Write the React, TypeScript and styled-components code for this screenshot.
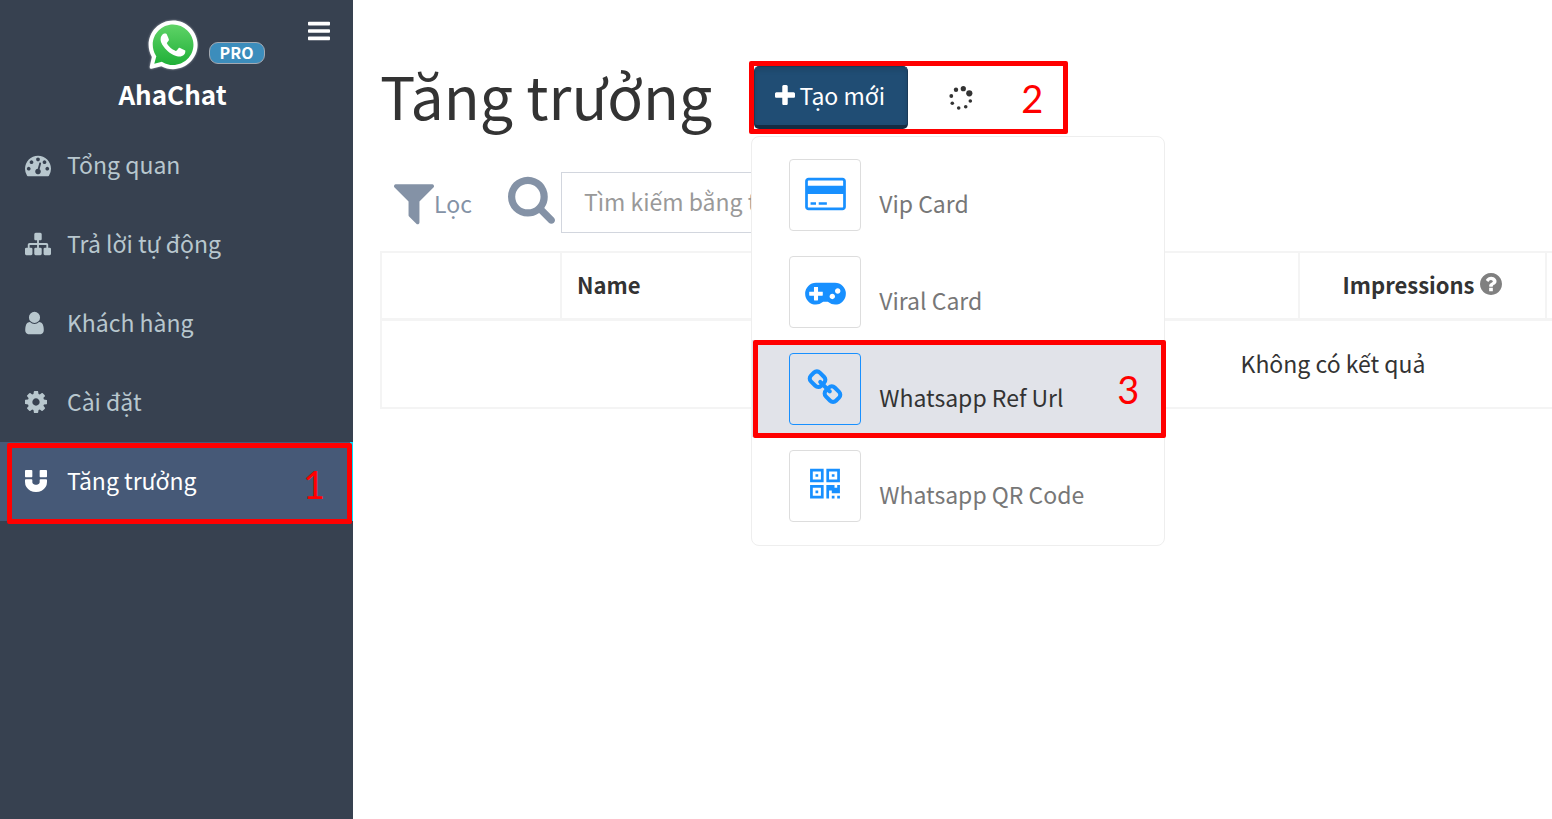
import React from "react";
import styled, { createGlobalStyle } from "styled-components";

const GlobalStyle = createGlobalStyle`
  *, *::before, *::after { box-sizing: border-box; }
  html, body, #root { margin: 0; min-height: 100vh; }
  body {
    background: #fff;
    color: #333;
    font-family: "Noto Sans CJK SC", "Noto Sans", sans-serif;
    font-size: 23px;
    line-height: 36px;
    overflow-x: hidden;
  }
  button, input { font: inherit; color: inherit; }
`;

type Glyph = { box: [number, number]; d: string };

/* box = [left, width] of the glyph on a 1792-unit-high grid */
const glyphs: Record<string, Glyph> = {
  dashboard: {
    box: [0, 1792],
    d: "M384 1152q0-53-37.5-90.5t-90.5-37.5-90.5 37.5-37.5 90.5 37.5 90.5 90.5 37.5 90.5-37.5 37.5-90.5zm192-448q0-53-37.5-90.5t-90.5-37.5-90.5 37.5-37.5 90.5 37.5 90.5 90.5 37.5 90.5-37.5 37.5-90.5zm428 481l101-382q6-26-7.5-48.5t-38.5-29.5-48 6.5-30 39.5l-101 382q-60 5-107 43.5t-63 98.5q-20 77 20 146t117 89 146-20 89-117q16-60-6-117t-72-91zm660-33q0-53-37.5-90.5t-90.5-37.5-90.5 37.5-37.5 90.5 37.5 90.5 90.5 37.5 90.5-37.5 37.5-90.5zm-640-640q0-53-37.5-90.5t-90.5-37.5-90.5 37.5-37.5 90.5 37.5 90.5 90.5 37.5 90.5-37.5 37.5-90.5zm448 192q0-53-37.5-90.5t-90.5-37.5-90.5 37.5-37.5 90.5 37.5 90.5 90.5 37.5 90.5-37.5 37.5-90.5zm320 448q0 261-141 483-19 29-54 29h-1402q-35 0-54-29-141-221-141-483 0-182 71-348t191-286 286-191 348-71 348 71 286 191 191 286 71 348z",
  },
  sitemap: {
    box: [0, 1792],
    d: "M1792 1248v320q0 40-28 68t-68 28h-320q-40 0-68-28t-28-68v-320q0-40 28-68t68-28h96v-192h-512v192h96q40 0 68 28t28 68v320q0 40-28 68t-68 28h-320q-40 0-68-28t-28-68v-320q0-40 28-68t68-28h96v-192h-512v192h96q40 0 68 28t28 68v320q0 40-28 68t-68 28h-320q-40 0-68-28t-28-68v-320q0-40 28-68t68-28h96v-192q0-52 38-90t90-38h512v-192h-96q-40 0-68-28t-28-68v-320q0-40 28-68t68-28h320q40 0 68 28t28 68v320q0 40-28 68t-68 28h-96v192h512q52 0 90 38t38 90v192h96q40 0 68 28t28 68z",
  },
  user: {
    box: [256, 1280],
    d: "M1536 1399q0 109-62.5 187t-150.5 78h-854q-88 0-150.5-78t-62.5-187q0-85 8.5-160.5t31.5-152 58.5-131 94-89 134.5-34.5q131 128 313 128t313-128q76 0 134.5 34.5t94 89 58.5 131 31.5 152 8.5 160.5zm-256-887q0 159-112.5 271.5t-271.5 112.5-271.5-112.5-112.5-271.5 112.5-271.5 271.5-112.5 271.5 112.5 112.5 271.5z",
  },
  cog: {
    box: [128, 1536],
    d: "M1152 896q0-106-75-181t-181-75-181 75-75 181 75 181 181 75 181-75 75-181zm512-109v222q0 12-8 23t-20 13l-185 28q-19 54-39 91 35 50 107 138 10 12 10 25t-9 23q-27 37-99 108t-94 71q-12 0-26-9l-138-108q-44 23-91 38-16 136-29 186-7 28-36 28h-222q-14 0-24.5-8.5t-11.5-21.5l-28-184q-49-16-90-37l-141 107q-10 9-25 9-14 0-25-11-126-114-165-168-7-10-7-23 0-12 8-23 15-21 51-66.5t54-70.5q-27-50-41-99l-183-27q-13-2-21-12.5t-8-23.5v-222q0-12 8-23t19-13l186-28q14-46 39-92-40-57-107-138-10-12-10-24 0-10 9-23 26-36 98.5-107.5t94.5-71.5q13 0 26 10l138 107q44-23 91-38 16-136 29-186 7-28 36-28h222q14 0 24.5 8.5t11.5 21.5l28 184q49 16 90 37l142-107q9-9 24-9 13 0 25 10 129 119 165 170 7 8 7 22 0 12-8 23-15 21-51 66.5t-54 70.5q26 50 41 98l183 28q13 2 21 12.5t8 23.5z",
  },
  magnet: {
    box: [128, 1536],
    d: "M1664 832v128q0 201-98.5 362t-274 251.5-395.5 90.5-395.5-90.5-274-251.5-98.5-362v-128q0-26 19-45t45-19h384q26 0 45 19t19 45v128q0 52 23.5 90t53.5 57 71 30 64 13 44 2 44-2 64-13 71-30 53.5-57 23.5-90v-128q0-26 19-45t45-19h384q26 0 45 19t19 45zm-1024-640v384q0 26-19 45t-45 19h-384q-26 0-45-19t-19-45v-384q0-26 19-45t45-19h384q26 0 45 19t19 45zm1024 0v384q0 26-19 45t-45 19h-384q-26 0-45-19t-19-45v-384q0-26 19-45t45-19h384q26 0 45 19t19 45z",
  },
  bars: {
    box: [128, 1536],
    d: "M1664 1344v128q0 26-19 45t-45 19h-1408q-26 0-45-19t-19-45v-128q0-26 19-45t45-19h1408q26 0 45 19t19 45zm0-512v128q0 26-19 45t-45 19h-1408q-26 0-45-19t-19-45v-128q0-26 19-45t45-19h1408q26 0 45 19t19 45zm0-512v128q0 26-19 45t-45 19h-1408q-26 0-45-19t-19-45v-128q0-26 19-45t45-19h1408q26 0 45 19t19 45z",
  },
  plus: {
    box: [192, 1408],
    d: "M1600 736v192q0 40-28 68t-68 28h-416v416q0 40-28 68t-68 28h-192q-40 0-68-28t-28-68v-416h-416q-40 0-68-28t-28-68v-192q0-40 28-68t68-28h416v-416q0-40 28-68t68-28h192q40 0 68 28t28 68v416h416q40 0 68 28t28 68z",
  },
  filter: {
    box: [192, 1408],
    d: "M1595 295q17 41-14 70l-493 493v742q0 42-39 59-13 5-25 5-27 0-45-19l-256-256q-19-19-19-45v-486l-493-493q-31-29-14-70 17-39 59-39h1280q42 0 59 39z",
  },
  search: {
    box: [64, 1664],
    d: "M1216 832q0-185-131.5-316.5t-316.5-131.5-316.5 131.5-131.5 316.5 131.5 316.5 316.5 131.5 316.5-131.5 131.5-316.5zm512 832q0 52-38 90t-90 38q-54 0-90-38l-343-342q-179 124-399 124-143 0-273.5-55.5t-225-150-150-225-55.5-273.5 55.5-273.5 150-225 225-150 273.5-55.5 273.5 55.5 225 150 150 225 55.5 273.5q0 220-124 399l343 343q37 37 37 90z",
  },
  help: {
    box: [128, 1536],
    d: "M1024 1376v-192q0-14-9-23t-23-9h-192q-14 0-23 9t-9 23v192q0 14 9 23t23 9h192q14 0 23-9t9-23zm256-672q0-88-55.5-163t-138.5-116-170-41q-243 0-371 213-15 24 8 42l132 100q7 6 19 6 16 0 25-12 53-68 86-92 34-24 86-24 48 0 85.5 26t37.5 59q0 38-20 61t-68 45q-63 28-115.5 86.5t-52.5 125.5v36q0 14 9 23t23 9h192q14 0 23-9t9-23q0-19 21.5-49.5t54.5-49.5q32-18 49-28.5t46-35 44.5-48 28-60.5 12.5-81zm384 192q0 209-103 385.5t-279.5 279.5-385.5 103-385.5-103-279.5-279.5-103-385.5 103-385.5 279.5-279.5 385.5-103 385.5 103 279.5 279.5 103 385.5z",
  },
  card: {
    box: [0, 1920],
    d: "M1760 128q66 0 113 47t47 113v1216q0 66-47 113t-113 47h-1600q-66 0-113-47t-47-113v-1216q0-66 47-113t113-47h1600zm-1600 128q-13 0-22.5 9.5t-9.5 22.5v224h1664v-224q0-13-9.5-22.5t-22.5-9.5h-1600zm1600 1280q13 0 22.5-9.5t9.5-22.5v-608h-1664v608q0 13 9.5 22.5t22.5 9.5h1600zm-1504-128v-128h256v128h-256zm384 0v-128h384v128h-384z",
  },
  gamepad: {
    box: [0, 1920],
    d: "M832 1088v-128q0-14-9-23t-23-9h-192v-192q0-14-9-23t-23-9h-128q-14 0-23 9t-9 23v192h-192q-14 0-23 9t-9 23v128q0 14 9 23t23 9h192v192q0 14 9 23t23 9h128q14 0 23-9t9-23v-192h192q14 0 23-9t9-23zm576 64q0-53-37.5-90.5t-90.5-37.5-90.5 37.5-37.5 90.5 37.5 90.5 90.5 37.5 90.5-37.5 37.5-90.5zm256-256q0-53-37.5-90.5t-90.5-37.5-90.5 37.5-37.5 90.5 37.5 90.5 90.5 37.5 90.5-37.5 37.5-90.5zm256 128q0 212-150 362t-362 150q-192 0-338-128h-220q-146 128-338 128-212 0-362-150t-150-362 150-362 362-150h896q212 0 362 150t150 362z",
  },
  chain: {
    box: [0, 1792],
    d: "M1520 1216q0-40-28-68l-208-208q-28-28-68-28-42 0-72 32 3 3 19 18.5t21.5 21.5 15 19 13 25.5 3.5 27.5q0 40-28 68t-68 28q-15 0-27.5-3.5t-25.5-13-19-15-21.5-21.5-18.5-19q-33 31-33 73 0 40 28 68l206 207q27 27 68 27 40 0 68-26l147-146q28-28 28-67zm-703-705q0-40-28-68l-206-207q-28-28-68-28-39 0-68 27l-147 146q-28 28-28 67 0 40 28 68l208 208q27 27 68 27 42 0 72-31-3-3-19-18.5t-21.5-21.5-15-19-13-25.5-3.5-27.5q0-40 28-68t68-28q15 0 27.5 3.5t25.5 13 19 15 21.5 21.5 18.5 19q33-31 33-73zm895 705q0 120-85 203l-147 146q-83 83-203 83-121 0-204-85l-206-207q-83-83-83-203 0-123 88-209l-88-88q-86 88-208 88-120 0-204-84l-208-208q-84-84-84-204t85-203l147-146q83-83 203-83 121 0 204 85l206 207q83 83 83 203 0 123-88 209l88 88q86-88 208-88 120 0 204 84l208 208q84 84 84 204z",
  },
  qrcode: {
    box: [0, 1792],
    d: "M576 1152v128h-128v-128h128zm0-768v128h-128v-128h128zm768 0v128h-128v-128h128zm-1024 1023h384v-383h-384v383zm0-767h384v-384h-384v384zm768 0h384v-384h-384v384zm-256 256v640h-640v-640h640zm512 512v128h-128v-128h128zm256 0v128h-128v-128h128zm0-512v384h-384v-128h-128v384h-128v-640h384v128h128v-128h128zm-768-768v640h-640v-640h640zm768 0v640h-640v-640h640z",
  },
};

const Svg = styled.svg`
  display: block;
  flex: none;
  fill: currentColor;
`;

function Icon({ name, size }: { name: keyof typeof glyphs; size: number }) {
  const { box, d } = glyphs[name];
  return (
    <Svg
      height={size}
      width={Math.round((size * box[1]) / 1792)}
      viewBox={`${box[0]} 0 ${box[1]} 1792`}
      aria-hidden="true"
    >
      <path d={d} />
    </Svg>
  );
}

const bubble =
  "M380.900 97.100C339 55.100 283.200 32 223.900 32c-122.400 0-222 99.600-222 222 0 39.100 10.200 77.300 29.600 111L12 452q-4 24 16 20l89.700-22.900c32.400 17.700 68.900 27 106.100 27 122.400 0 224.200-99.600 224.200-222 0-59.300-25.200-115-67.100-157z";

function WhatsappLogo() {
  return (
    <Svg width="54" height="54" viewBox="-22 10 492 492" role="img" aria-label="WhatsApp">
      <defs>
        <linearGradient id="wa" x1="0" y1="0" x2="0" y2="1">
          <stop offset="0" stopColor="#5fd367" />
          <stop offset="1" stopColor="#20b038" />
        </linearGradient>
        <filter id="glow" x="-10%" y="-10%" width="120%" height="120%">
          <feGaussianBlur stdDeviation="9" />
        </filter>
      </defs>
      <path d={bubble} fill="#c8ccd2" opacity="0.7" filter="url(#glow)" />
      <path d={bubble} fill="#fff" />
      <path
        d="M223.900 438.700c-33.200 0-65.700-8.900-94-25.700l-6.700-4-69.800 18.300L72 359.200l-4.400-7c-18.500-29.400-28.200-63.300-28.200-98.200 0-101.700 82.800-184.500 184.600-184.500 49.300 0 95.600 19.200 130.400 54.100 34.800 34.900 56.200 81.200 56.100 130.500 0 101.800-84.900 184.600-186.600 184.600z"
        fill="url(#wa)"
      />
      <path
        d="M325.100 300.500c-5.500-2.800-32.800-16.200-37.900-18-5.100-1.900-8.800-2.800-12.500 2.800-3.700 5.600-14.300 18-17.600 21.800-3.200 3.700-6.500 4.200-12 1.400-32.600-16.300-54-29.100-75.500-66-5.700-9.800 5.700-9.100 16.300-30.300 1.800-3.700.9-6.900-.5-9.700-1.400-2.800-12.500-30.100-17.100-41.200-4.500-10.800-9.100-9.300-12.500-9.500-3.200-.2-6.900-.2-10.600-.2-3.700 0-9.700 1.400-14.800 6.900-5.100 5.600-19.400 19-19.400 46.300 0 27.300 19.900 53.700 22.600 57.400 2.800 3.700 39.100 59.700 94.800 83.800 35.200 15.200 49 16.500 66.600 13.900 10.700-1.600 32.800-13.400 37.400-26.400 4.600-13 4.600-24.100 3.200-26.400-1.300-2.500-5-3.900-10.500-6.600z"
        fill="#fff"
      />
    </Svg>
  );
}

const dots: [number, number, number][] = [
  [21.3, 8.3, 3.1],
  [15.3, 3.7, 2.6],
  [8, 4.7, 2.2],
  [3.3, 11, 1.9],
  [4.3, 18.3, 1.8],
  [10.7, 23, 1.8],
  [17.7, 21.7, 1.8],
  [22.3, 16, 1.8],
];

function Spinner() {
  return (
    <Svg width="26" height="26" viewBox="0 0 26 26" role="img" aria-label="Loading">
      {dots.map(([x, y, r]) => (
        <circle key={`${x}-${y}`} cx={x} cy={y} r={r} />
      ))}
    </Svg>
  );
}

const Page = styled.div`
  display: flex;
  min-height: 100vh;
`;

const Sidebar = styled.aside`
  flex: 0 0 353px;
  background: #374150;
  color: #b8c7ce;
`;

const Brand = styled.div`
  display: grid;
  grid-template-columns: 1fr 54px 1fr;
  grid-template-rows: 58px 36px;
  padding: 18px 23px 0 15px;
  height: 126px;
  color: #fff;
`;

const BrandTools = styled.div`
  grid-column: 3;
  grid-row: 1;
  display: flex;
  justify-content: space-between;
  align-items: flex-start;
  padding-left: 9px;
`;

const LogoCell = styled.div`
  grid-column: 2;
  grid-row: 1;
`;

const Badge = styled.span`
  margin-top: 24px;
  width: 56px;
  height: 22px;
  border: 1px solid #a3a9b2;
  border-radius: 9px;
  background: #3c8dbc;
  font-size: 16px;
  font-weight: 700;
  line-height: 18px;
  text-align: center;
`;

const MenuToggle = styled.button`
  padding: 0;
  border: 0;
  background: none;
  color: #fff;
`;

const BrandName = styled.strong`
  grid-column: 1 / -1;
  grid-row: 2;
  text-align: center;
  font-size: 26px;
`;

const NavLink = styled.a<{ $active?: boolean }>`
  position: relative;
  display: flex;
  align-items: center;
  height: 79px;
  padding-left: 25px;
  border-right: 3px solid ${(p) => (p.$active ? "#00e1ff" : "transparent")};
  background: ${(p) => (p.$active ? "#465977" : "transparent")};
  color: ${(p) => (p.$active ? "#fff" : "inherit")};
  text-decoration: none;
`;

const NavIcon = styled.span`
  width: 42px;
  padding-bottom: 2px;
`;

/* the font's tall ascent sets text low in its line, so labels carry space below */
const Label = styled.span`
  padding-bottom: 3px;
`;

/* numbered tutorial frame drawn over the control it points at */
const Callout = styled.span<{ $inset: string; $pad?: number }>`
  position: absolute;
  inset: ${(p) => p.$inset};
  z-index: 2;
  display: flex;
  align-items: center;
  justify-content: flex-end;
  padding-right: ${(p) => p.$pad ?? 22}px;
  border: 5px solid #f00;
  border-radius: 2px;
  color: #f00;
  font-family: Lato, sans-serif;
  font-size: 38px;
  pointer-events: none;
`;

const Main = styled.main`
  flex: 1;
  min-width: 0;
  padding: 61px 0 0 27px;
  overflow: hidden;
`;

const Header = styled.header`
  display: flex;
  align-items: center;
  height: 73px;
`;

const Title = styled.h1`
  margin: 0;
  padding-bottom: 6px;
  font-size: 59px;
  font-weight: 400;
  line-height: 67px;
  white-space: nowrap;
`;

const Actions = styled.div`
  position: relative;
  display: flex;
  align-items: center;
  gap: 40px;
  width: 309px;
  margin-left: 42px;
`;

const CreateButton = styled.button`
  display: flex;
  align-items: center;
  justify-content: center;
  gap: 4px;
  width: 154px;
  height: 63px;
  padding: 0 2px 0 0;
  border: 1px solid #1a3a58;
  border-bottom: 4px solid #152c42;
  border-radius: 5px;
  background: #204d74;
  box-shadow: inset 0 3px 5px rgba(0, 0, 0, 0.125);
  color: #fff;
`;

const Menu = styled.ul`
  position: absolute;
  top: 70px;
  left: -3px;
  z-index: 1;
  width: 414px;
  margin: 0;
  padding: 9px 0 11px;
  border: 1px solid #eee;
  border-radius: 8px;
  background: #fff;
  list-style: none;
`;

const MenuItem = styled.li`
  position: relative;
`;

const MenuLink = styled.a<{ $active?: boolean }>`
  display: flex;
  align-items: center;
  gap: 18px;
  height: 97px;
  padding-left: 37px;
  background: ${(p) => (p.$active ? "#e1e3e9" : "transparent")};
  color: ${(p) => (p.$active ? "#333" : "#777")};
  text-decoration: none;
`;

const Tile = styled.span<{ $active?: boolean }>`
  display: flex;
  align-items: center;
  justify-content: center;
  width: 72px;
  height: 72px;
  padding-bottom: 2px;
  border: 1px solid ${(p) => (p.$active ? "#1890ff" : "#ddd")};
  border-radius: 4px;
  color: #1890ff;
`;

const MenuText = styled.span`
  padding-top: 17px;
`;

const Toolbar = styled.form`
  display: flex;
  align-items: center;
  height: 61px;
  margin: 38px 0 18px;
  padding-left: 14px;
  color: #8492a6;
`;

const FilterButton = styled.button`
  display: flex;
  align-items: center;
  width: 114px;
  padding: 0;
  border: 0;
  background: none;
`;

const SearchLabel = styled.label`
  padding: 0 6px 8px 0;
`;

const SearchInput = styled.input`
  width: 450px;
  height: 61px;
  padding: 0 22px 4px;
  border: 1px solid #d2d6de;
  background: #fff;
  &::placeholder { color: #999; opacity: 1; }
`;

const Table = styled.table`
  width: 100%;
  min-width: 1906px;
  table-layout: fixed;
  border-spacing: 0;
  border: 2px solid #f4f4f4;
  border-width: 2px 0 0 2px;
`;

const HeadCell = styled.th<{ $w?: number; $align?: string }>`
  width: ${(p) => (p.$w ? `${p.$w}px` : "auto")};
  height: 68px;
  padding: 0 15px;
  border-right: 2px solid #f4f4f4;
  border-bottom: 3px solid #f4f4f4;
  font-size: 22px;
  text-align: ${(p) => p.$align ?? "left"};
`;

const HeadLabel = styled.span`
  display: inline-flex;
  align-items: center;
  gap: 6px;
  padding-bottom: 3px;
  svg { color: #808080; }
`;

const EmptyCell = styled.td`
  height: 88px;
  padding: 0 0 2px;
  border-right: 2px solid #f4f4f4;
  border-bottom: 2px solid #f4f4f4;
  text-align: center;
`;

const nav = [
  { icon: "dashboard", label: "Tổng quan" },
  { icon: "sitemap", label: "Trả lời tự động" },
  { icon: "user", label: "Khách hàng" },
  { icon: "cog", label: "Cài đặt" },
  { icon: "magnet", label: "Tăng trưởng", active: true },
];

const tools = [
  { icon: "card", label: "Vip Card" },
  { icon: "gamepad", label: "Viral Card" },
  { icon: "chain", label: "Whatsapp Ref Url", active: true },
  { icon: "qrcode", label: "Whatsapp QR Code" },
];

export default function App() {
  return (
    <Page>
      <GlobalStyle />
      <Sidebar>
        <Brand>
          <LogoCell>
            <WhatsappLogo />
          </LogoCell>
          <BrandTools>
            <Badge>PRO</Badge>
            <MenuToggle type="button" aria-label="Menu">
              <Icon name="bars" size={26} />
            </MenuToggle>
          </BrandTools>
          <BrandName>AhaChat</BrandName>
        </Brand>
        <nav>
          {nav.map((item) => (
            <NavLink key={item.label} href="#" $active={item.active}>
              <NavIcon>
                <Icon name={item.icon} size={26} />
              </NavIcon>
              <Label>{item.label}</Label>
              {item.active && <Callout $inset="1px -2px -3px 7px">1</Callout>}
            </NavLink>
          ))}
        </nav>
      </Sidebar>
      <Main>
        <Header>
          <Title>Tăng trưởng</Title>
          <Actions>
            <CreateButton type="button">
              <Icon name="plus" size={26} />
              <Label>Tạo mới</Label>
            </CreateButton>
            <Spinner />
            <Callout $inset="-5px" $pad={20}>
              2
            </Callout>
            <Menu>
              {tools.map((tool) => (
                <MenuItem key={tool.label}>
                  <MenuLink href="#" $active={tool.active}>
                    <Tile $active={tool.active}>
                      <Icon name={tool.icon} size={38} />
                    </Tile>
                    <MenuText>{tool.label}</MenuText>
                  </MenuLink>
                  {tool.active && <Callout $inset="0 -2px -1px 1px">3</Callout>}
                </MenuItem>
              ))}
            </Menu>
          </Actions>
        </Header>
        <Toolbar>
          <FilterButton type="button">
            <Icon name="filter" size={51} />
            Lọc
          </FilterButton>
          <SearchLabel htmlFor="search" aria-label="Tìm kiếm">
            <Icon name="search" size={51} />
          </SearchLabel>
          <SearchInput id="search" type="text" placeholder="Tìm kiếm bằng tên" />
        </Toolbar>
        <Table>
          <thead>
            <tr>
              <HeadCell $w={180} />
              <HeadCell $w={738}>
                <HeadLabel>Name</HeadLabel>
              </HeadCell>
              <HeadCell $w={247} $align="center">
                <HeadLabel>
                  Impressions
                  <Icon name="help" size={26} />
                </HeadLabel>
              </HeadCell>
              <HeadCell />
            </tr>
          </thead>
          <tbody>
            <tr>
              <EmptyCell colSpan={4}>Không có kết quả</EmptyCell>
            </tr>
          </tbody>
        </Table>
      </Main>
    </Page>
  );
}
